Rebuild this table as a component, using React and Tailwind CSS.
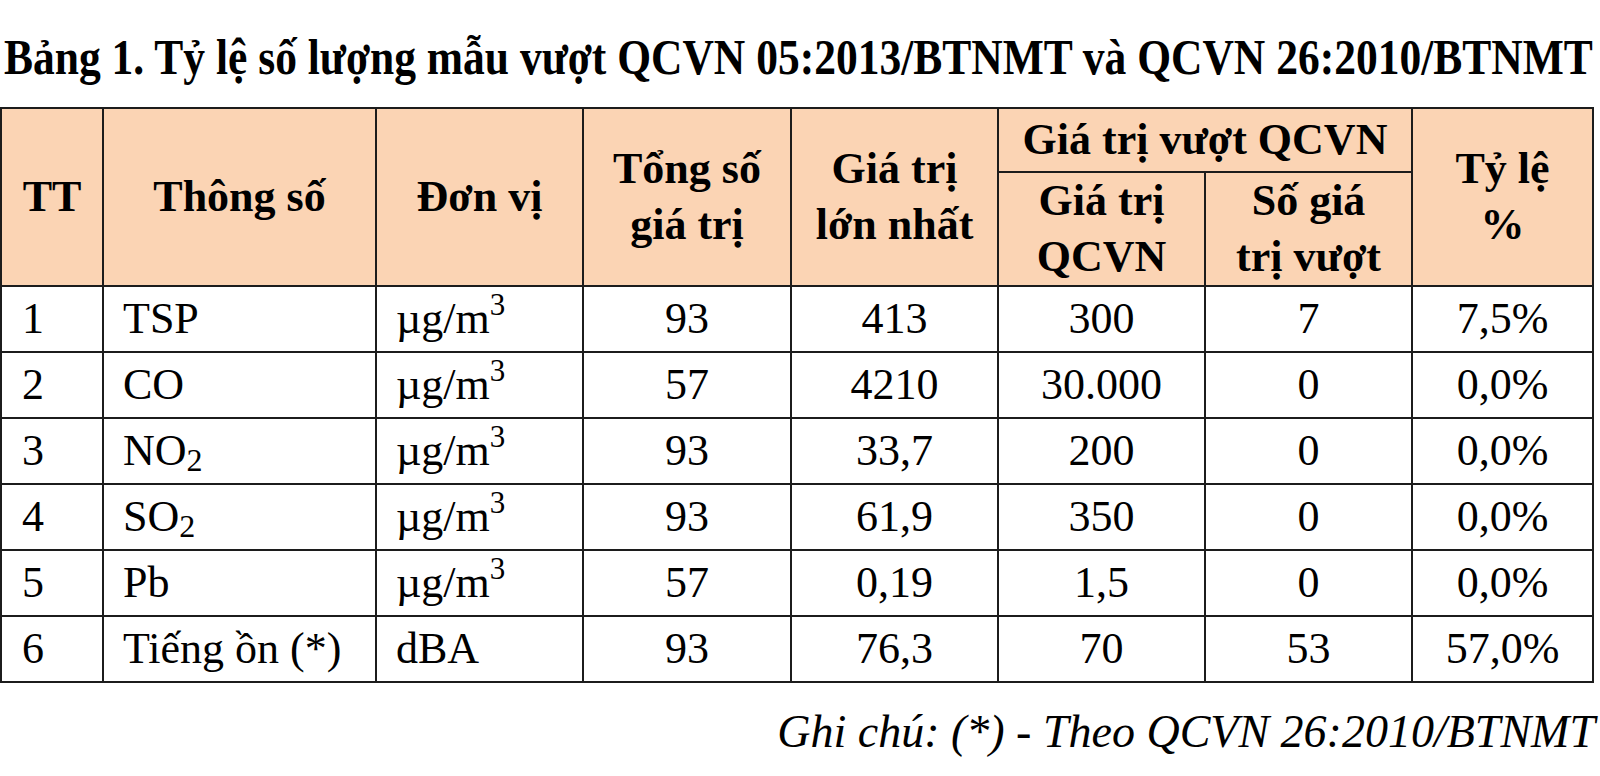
const rows = [
    { tt: "1", name: "TSP", unit: "ug", total: "93", max: "413", limit: "300", over: "7", rate: "7,5%" },
    { tt: "2", name: "CO", unit: "ug", total: "57", max: "4210", limit: "30.000", over: "0", rate: "0,0%" },
    { tt: "3", name: "NO", sub: "2", unit: "ug", total: "93", max: "33,7", limit: "200", over: "0", rate: "0,0%" },
    { tt: "4", name: "SO", sub: "2", unit: "ug", total: "93", max: "61,9", limit: "350", over: "0", rate: "0,0%" },
    { tt: "5", name: "Pb", unit: "ug", total: "57", max: "0,19", limit: "1,5", over: "0", rate: "0,0%" },
    { tt: "6", name: "Tiếng ồn (*)", unit: "dBA", total: "93", max: "76,3", limit: "70", over: "53", rate: "57,0%" },
];

const Unit = ({ unit }) =>
    unit === "ug" ? (
        <span>
            µg/m<sup className="text-[31px] top-[-18px]">3</sup>
        </span>
    ) : (
        <span>{unit}</span>
    );

const th = "border-2 border-[#1c1c1c] bg-[#fbd4b4] font-bold text-center align-middle leading-[56px]";
const td = "border-2 border-[#1c1c1c] align-middle h-[66px] leading-none";

const App = () => {
    return (
        <div className="w-[1600px] h-[776px] bg-white text-black font-['Liberation_Serif',serif] overflow-hidden">
            {/* Title */}
            <div className="h-[107px] flex items-center pl-[4px] pt-[10px] pb-[3px]">
                <h1 className="inline-block origin-left scale-x-[0.87] text-[50px] font-bold whitespace-nowrap leading-none">
                    Bảng 1. Tỷ lệ số lượng mẫu vượt QCVN 05:2013/BTNMT và QCVN 26:2010/BTNMT
                </h1>
            </div>

            {/* Table */}
            <table className="table-fixed border-collapse w-[1592px] text-[44px]">
                <colgroup>
                    <col className="w-[102px]" />
                    <col className="w-[273px]" />
                    <col className="w-[207px]" />
                    <col className="w-[208px]" />
                    <col className="w-[207px]" />
                    <col className="w-[207px]" />
                    <col className="w-[207px]" />
                    <col className="w-[181px]" />
                </colgroup>
                <thead>
                    <tr className="h-[64px]">
                        <th rowSpan={2} className={th}>TT</th>
                        <th rowSpan={2} className={th}>Thông số</th>
                        <th rowSpan={2} className={th}>Đơn vị</th>
                        <th rowSpan={2} className={th}>
                            Tổng số
                            <br />
                            giá trị
                        </th>
                        <th rowSpan={2} className={th}>
                            Giá trị
                            <br />
                            lớn nhất
                        </th>
                        <th colSpan={2} className={th}>Giá trị vượt QCVN</th>
                        <th rowSpan={2} className={th}>
                            Tỷ lệ
                            <br />%
                        </th>
                    </tr>
                    <tr className="h-[103px]">
                        <th className={th}>
                            Giá trị
                            <br />
                            QCVN
                        </th>
                        <th className={th}>
                            Số giá
                            <br />
                            trị vượt
                        </th>
                    </tr>
                </thead>
                <tbody>
                    {rows.map((r) => (
                        <tr key={r.tt}>
                            <td className={`${td} pl-[20px]`}>{r.tt}</td>
                            <td className={`${td} pl-[19px] whitespace-nowrap`}>
                                {r.name}
                                {r.sub && <sub className="text-[32px] bottom-[-6px]">{r.sub}</sub>}
                            </td>
                            <td className={`${td} pl-[19px]`}>
                                <Unit unit={r.unit} />
                            </td>
                            <td className={`${td} text-center`}>{r.total}</td>
                            <td className={`${td} text-center`}>{r.max}</td>
                            <td className={`${td} text-center`}>{r.limit}</td>
                            <td className={`${td} text-center`}>{r.over}</td>
                            <td className={`${td} text-center`}>{r.rate}</td>
                        </tr>
                    ))}
                </tbody>
            </table>

            {/* Note */}
            <p className="pt-[26px] pr-[5px] text-right italic text-[46px] leading-none whitespace-nowrap">
                Ghi chú: (*) - Theo QCVN 26:2010/BTNMT
            </p>
        </div>
    );
};

export default App;
